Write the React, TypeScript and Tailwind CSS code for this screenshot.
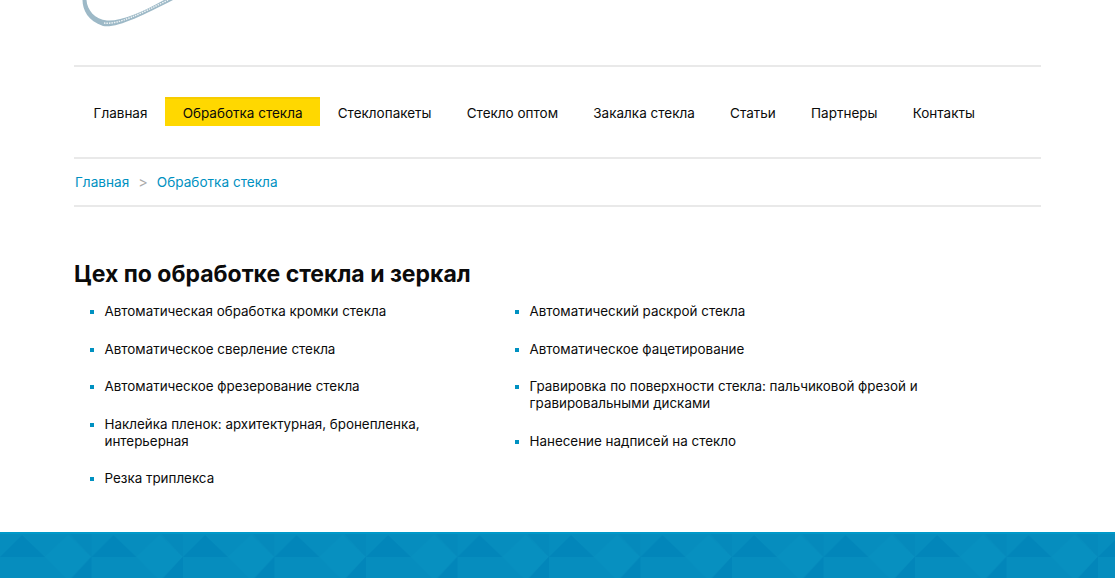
const nav = ['Главная', 'Обработка стекла', 'Стеклопакеты', 'Стекло оптом', 'Закалка стекла', 'Статьи', 'Партнеры', 'Контакты'];

const leftItems = [
  'Автоматическая обработка кромки стекла',
  'Автоматическое сверление стекла',
  'Автоматическое фрезерование стекла',
  'Наклейка пленок: архитектурная, бронепленка, интерьерная',
  'Резка триплекса',
];

const rightItems = [
  'Автоматический раскрой стекла',
  'Автоматическое фацетирование',
  'Гравировка по поверхности стекла: пальчиковой фрезой и гравировальными дисками',
  'Нанесение надписей на стекло',
];

function Ring() {
  return (
    <svg width="100" height="28" viewBox="0 0 100 28" fill="none">
      <path d="M2.500 0C2.500 10 8 21 23 26C36 28.500 62 16 93 0L84 0C62 12.500 40 21.500 27 20.500C15 19.500 7 10 6.500 0Z" fill="#9db9c7" />
      <path d="M24 23C38 25 60 14 88 0" stroke="#eef3f5" strokeWidth="1.500" strokeDasharray="1.500 1" />
    </svg>
  );
}

function Bullets({ items, className }: { items: string[]; className: string }) {
  return (
    <ul className={className}>
      {items.map((item) => (
        <li key={item} className="relative mb-[20.600px] pl-[15px] text-[13.400px] leading-[17px] text-[#0b0b0b]">
          <span className="absolute left-0 top-[7px] h-[4px] w-[4px] bg-[#0091c1]" />
          {item}
        </li>
      ))}
    </ul>
  );
}

function FooterPattern() {
  return (
    <svg className="h-full w-full" xmlns="http://www.w3.org/2000/svg">
      <defs>
        <pattern id="tri" width="91.500" height="46" patternUnits="userSpaceOnUse">
          <path d="M70 0H91.500V23H91Z" fill="#058abc" />
          <path d="M0 23L22 1L45 23Z" fill="#0286ba" />
          <path d="M68 1L91 23L68 46L45 23Z" fill="#0790c0" />
          <path d="M91 23L70 46H91.500V23Z" fill="#0286ba" />
        </pattern>
      </defs>
      <rect width="100%" height="100%" fill="#068dbe" />
      <rect width="100%" height="100%" fill="url(#tri)" />
    </svg>
  );
}

export default function App() {
  return (
    <div className="h-[578px] overflow-hidden bg-white font-['Inter','Liberation_Sans',sans-serif]">
      <div className="mx-[74px] w-[967px]">
        <div className="h-[65px]">
          <div className="pl-[6px]">
            <Ring />
          </div>
        </div>
        <div className="h-[2px] bg-[#e9e9e9]" />
        <nav className="flex h-[90px] items-center pl-[2px]">
          {nav.map((label, i) => (
            <a
              key={label}
              className={
                i === 1
                  ? 'mb-[1px] flex h-[29px] items-center border-t-2 border-[#f7cc00] bg-[#ffd800] px-[17.600px] pt-[1px] text-[13.500px] text-[#0b0b0b]'
                  : 'flex h-[30px] items-center px-[17.600px] pt-[3px] text-[13.500px] text-[#0b0b0b]'
              }
            >
              {label}
            </a>
          ))}
        </nav>
        <div className="h-[2px] bg-[#e9e9e9]" />
        <div className="flex h-[46px] items-center pl-[1px] text-[13.600px] text-[#0091c1]">
          <span>Главная</span>
          <span className="mx-[9px] text-[14.500px] text-[#aaa]">&gt;</span>
          <span>Обработка стекла</span>
        </div>
        <div className="h-[2px] bg-[#e9e9e9]" />
        <h1 className="mt-[52px] text-[23px] font-bold leading-[30px] text-[#0b0b0b]">Цех по обработке стекла и зеркал</h1>
        <div className="mt-[14px] flex pl-[15.500px]">
          <Bullets items={leftItems} className="w-[340px]" />
          <div className="w-[85px]" />
          <Bullets items={rightItems} className="w-[415px]" />
        </div>
      </div>
      <div className="fixed bottom-0 left-0 right-0 h-[46px] border-t-2 border-[#0099c9]">
        <FooterPattern />
      </div>
    </div>
  );
}
